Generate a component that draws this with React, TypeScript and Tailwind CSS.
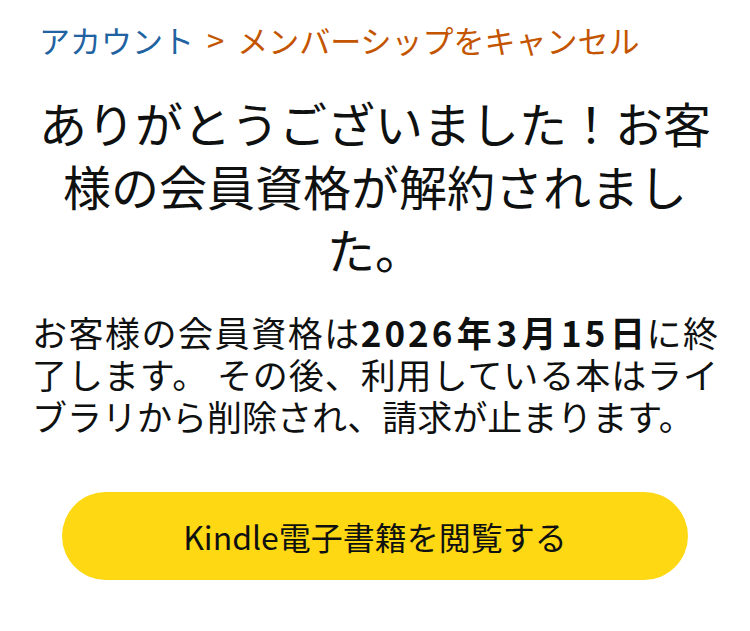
export default function App() {
  return (
    <div
      className="min-h-[631px] w-[750px] bg-white text-[#0f1111]"
      style={{ fontFamily: '"Noto Sans CJK JP", "Noto Sans", sans-serif' }}
    >
      <div className="px-[32px] pt-[19px]">
        <nav className="flex items-center text-[31px] leading-[42px] px-[7px]">
          <a href="#" className="text-[#2162a1]">アカウント</a>
          <span className="mx-[13px] text-[#c45500]">&gt;</span>
          <span className="text-[#c45500]">メンバーシップをキャンセル</span>
        </nav>

        <h1 className="mt-[30px] text-center text-[48px] leading-[63px] font-normal">
          ありがとうございました！お客様の会員資格が解約されました。
        </h1>

        <p className="mt-[31px] text-[35px] leading-[42px] text-justify">
          お客様の会員資格は<b className="font-bold"><span className="tracking-[3px]">2026年3月15</span>日</b>に終了します。 その後、利用している本はライブラリから削除され、請求が止まります。
        </p>

        <div className="mt-[55px] px-[30px]">
          <button className="w-full h-[88px] rounded-full bg-[#ffd814] text-[32px] text-[#0f1111]">
            Kindle電子書籍を閲覧する
          </button>
        </div>
      </div>
    </div>
  )
}
